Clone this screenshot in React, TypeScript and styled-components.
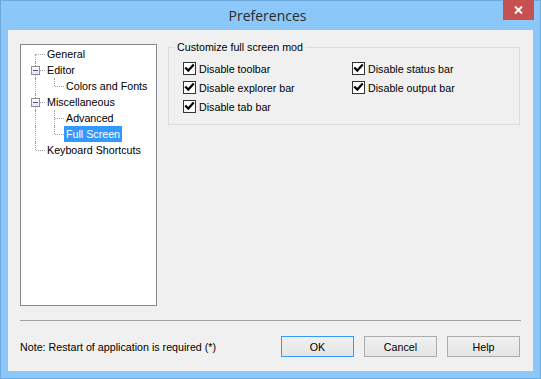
import styled, { createGlobalStyle } from "styled-components";

const GlobalStyle = createGlobalStyle`
  html, body {
    margin: 0;
    padding: 0;
    background: #ffffff;
  }
  body {
    font-family: "Liberation Sans", Arial, sans-serif;
    font-size: 10.7px;
    color: #000;
  }
`;

type Line = "none" | "full" | "top" | "bottom";

interface TreeNode {
  label: string;
  guides: { v: Line; h: boolean; expander?: boolean }[];
  selected?: boolean;
}

const tree: TreeNode[] = [
  { label: "General", guides: [{ v: "bottom", h: true }] },
  { label: "Editor", guides: [{ v: "full", h: true, expander: true }] },
  {
    label: "Colors and Fonts",
    guides: [
      { v: "full", h: false },
      { v: "top", h: true },
    ],
  },
  { label: "Miscellaneous", guides: [{ v: "full", h: true, expander: true }] },
  {
    label: "Advanced",
    guides: [
      { v: "full", h: false },
      { v: "full", h: true },
    ],
  },
  {
    label: "Full Screen",
    selected: true,
    guides: [
      { v: "full", h: false },
      { v: "top", h: true },
    ],
  },
  { label: "Keyboard Shortcuts", guides: [{ v: "top", h: true }] },
];

const options = [
  "Disable toolbar",
  "Disable status bar",
  "Disable explorer bar",
  "Disable output bar",
  "Disable tab bar",
];

const CheckMark = () => (
  <svg width="11" height="11" viewBox="0 0 11 11">
    <path
      d="M2 5.2 L4.3 7.6 L9 2.4"
      fill="none"
      stroke="#000"
      strokeWidth="2.2"
      strokeLinecap="square"
    />
  </svg>
);

const App = () => {
  return (
    <>
      <GlobalStyle />
      <Window>
        <TitleBar>
          <span />
          <Title>Preferences</Title>
          <CloseButton>
            <svg width="9" height="8" viewBox="0 0 9 8">
              <path d="M1 0.5 L8 7.5 M8 0.5 L1 7.5" stroke="#fff" strokeWidth="2" />
            </svg>
          </CloseButton>
        </TitleBar>
        <Client>
          <Main>
            <TreePanel>
              {tree.map((node) => (
                <TreeRow key={node.label}>
                  {node.guides.map((g, i) => (
                    <Guide key={i} $v={g.v} $h={g.h}>
                      {g.expander && <Expander />}
                    </Guide>
                  ))}
                  <TreeLabel $selected={node.selected}>{node.label}</TreeLabel>
                </TreeRow>
              ))}
            </TreePanel>
            <Group>
              <Legend>Customize full screen mod</Legend>
              <OptionGrid>
                {options.map((opt) => (
                  <Option key={opt}>
                    <Box>
                      <CheckMark />
                    </Box>
                    {opt}
                  </Option>
                ))}
              </OptionGrid>
            </Group>
          </Main>
          <Separator />
          <Footer>
            <Note>Note: Restart of application is required (*)</Note>
            <Buttons>
              <Button $default>OK</Button>
              <Button>Cancel</Button>
              <Button>Help</Button>
            </Buttons>
          </Footer>
        </Client>
      </Window>
    </>
  );
};

const Window = styled.div`
  width: 541px;
  height: 379px;
  box-sizing: border-box;
  background: #8bc7f8;
  border: 1px solid #6ea9de;
  display: flex;
  flex-direction: column;
`;

const TitleBar = styled.div`
  height: 29px;
  display: grid;
  grid-template-columns: 1fr auto 1fr;
  padding-right: 6px;
`;

const Title = styled.div`
  font-family: "Open Sans", "Noto Sans", sans-serif;
  font-size: 14px;
  color: #2b2b2b;
  line-height: 29px;
`;

const CloseButton = styled.div`
  justify-self: end;
  width: 31px;
  height: 20px;
  margin-top: -1px;
  background: #c75050;
  display: flex;
  align-items: center;
  justify-content: center;
`;

const Client = styled.div`
  flex: 1;
  margin: 0 7px 7px;
  background: #f0f0f0;
  display: flex;
  flex-direction: column;
`;

const Main = styled.div`
  display: flex;
  align-items: flex-start;
  padding: 11px 0 0 12px;
`;

const TreePanel = styled.div`
  width: 137px;
  height: 262px;
  margin-top: 3px;
  box-sizing: border-box;
  border: 1px solid #828790;
  background: #fff;
  padding: 1px 0 0 5px;
`;

const TreeRow = styled.div`
  display: flex;
  height: 16px;
  align-items: stretch;
`;

const Guide = styled.span<{ $v: Line; $h: boolean }>`
  position: relative;
  width: 19px;
  flex: none;

  &::before {
    content: "";
    display: ${(p) => (p.$v === "none" ? "none" : "block")};
    position: absolute;
    left: 9px;
    top: ${(p) => (p.$v === "bottom" ? "8px" : "0")};
    bottom: ${(p) => (p.$v === "top" ? "8px" : "0")};
    border-left: 1px dotted #a0a0a0;
  }

  &::after {
    content: "";
    display: ${(p) => (p.$h ? "block" : "none")};
    position: absolute;
    left: 10px;
    right: 0;
    top: 8px;
    border-top: 1px dotted #a0a0a0;
  }
`;

const Expander = styled.span`
  position: absolute;
  left: 5px;
  top: 4px;
  width: 9px;
  height: 9px;
  box-sizing: border-box;
  border: 1px solid #919191;
  background: linear-gradient(#ffffff, #e6e6e6);
  z-index: 1;

  &::after {
    content: "";
    position: absolute;
    left: 1px;
    right: 1px;
    top: 3px;
    height: 1px;
    background: #3c50a0;
  }
`;

const TreeLabel = styled.span<{ $selected?: boolean }>`
  padding: 0 2px;
  line-height: 16px;
  white-space: nowrap;
  background: ${(p) => (p.$selected ? "#3399ff" : "transparent")};
  color: ${(p) => (p.$selected ? "#fff" : "#000")};
`;

const Group = styled.fieldset`
  margin: 0 0 0 11px;
  width: 352px;
  box-sizing: border-box;
  border: 1px solid #dcdcdc;
  padding: 0 8px 8px 6px;
  min-width: 0;
`;

const Legend = styled.legend`
  padding: 0 2px;
  line-height: 13px;
`;

const OptionGrid = styled.div`
  display: grid;
  grid-template-columns: 169px auto;
  grid-auto-rows: 19px;
  margin: 5px 0 0 8px;
`;

const Option = styled.label`
  display: flex;
  align-items: center;
  gap: 3px;
  white-space: nowrap;
`;

const Box = styled.span`
  width: 13px;
  height: 13px;
  box-sizing: border-box;
  border: 1px solid #333;
  background: #fff;
  display: flex;
  align-items: center;
  justify-content: center;
`;

const Separator = styled.div`
  height: 1px;
  background: #a0a0a0;
  margin: 14px 12px 0;
`;

const Footer = styled.div`
  display: flex;
  align-items: center;
  justify-content: space-between;
  margin: 15px 13px 0 12px;
`;

const Note = styled.span`
  white-space: nowrap;
`;

const Buttons = styled.div`
  display: flex;
  gap: 10px;
`;

const Button = styled.button<{ $default?: boolean }>`
  width: 73px;
  height: 21px;
  box-sizing: border-box;
  padding: 0;
  font-family: inherit;
  font-size: 10.7px;
  color: #000;
  border: 1px solid ${(p) => (p.$default ? "#3399ff" : "#acacac")};
  background: linear-gradient(#f0f0f0, #e5e5e5);
  border-radius: 0;
`;

export default App;
